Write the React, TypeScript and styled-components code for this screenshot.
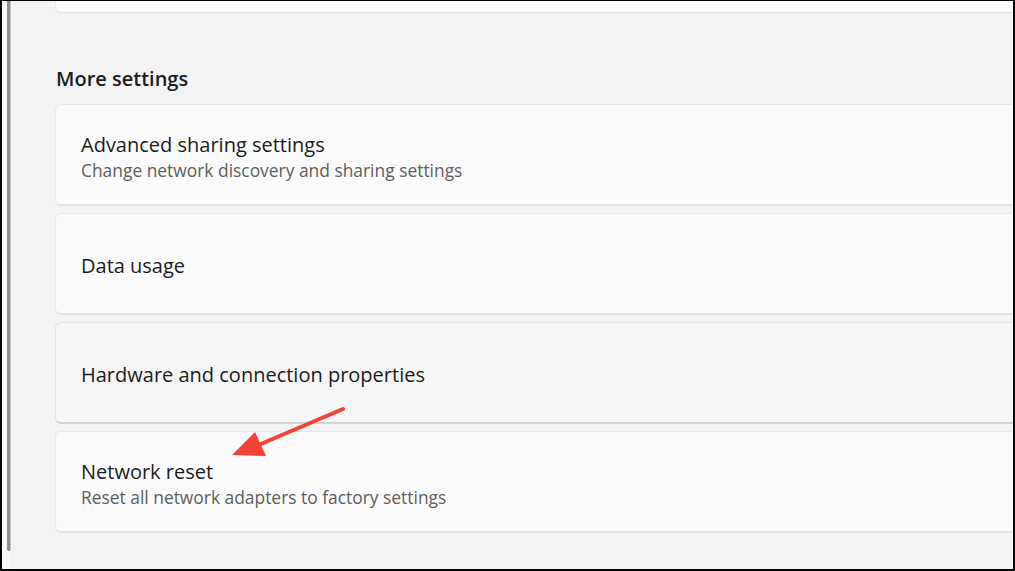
import React from "react";
import styled, { createGlobalStyle } from "styled-components";

const Global = createGlobalStyle`
  html, body { margin: 0; padding: 0; background: #000; }
  body { font-family: "Open Sans", "Noto Sans", sans-serif; }
  * { box-sizing: border-box; }
`;

const Frame = styled.div`
  position: relative;
  width: 1015px;
  height: 571px;
  border-left: 2px solid #000;
  border-top: 1px solid #000;
  border-right: 2px solid #000;
  border-bottom: 2px solid #000;
  display: flex;
  overflow: hidden;
  background: #f3f3f3;
`;

const Rail = styled.div`
  width: 8px;
  flex: none;
  background: #f9f9f9;
  padding-left: 5px;
`;

const ScrollThumb = styled.div`
  width: 3px;
  height: 550px;
  background: #8f8f8f;
  border-radius: 0 0 2px 2px;
  box-shadow: 1px 0 0 #c4c4c4;
`;

const Main = styled.main`
  flex: 1;
  min-width: 0;
  padding-left: 45px;
  display: flex;
  flex-direction: column;
  overflow: hidden;
`;

const ClippedCard = styled.div`
  height: 12px;
  margin-right: -12px;
  background: #fbfbfb;
  border: 1px solid #e6e6e6;
  border-top: none;
  border-bottom-color: #e2e2e2;
  border-radius: 0 0 6px 6px;
  flex: none;
`;

const Heading = styled.h2`
  margin: 52px 0 11px 1px;
  font-size: 20px;
  line-height: 28px;
  font-weight: 600;
  color: #1b1b1b;
`;

const List = styled.div`
  display: flex;
  flex-direction: column;
  gap: 7px;
  margin-right: -12px;
`;

const Card = styled.div<{ $hover?: boolean }>`
  height: 102px;
  display: flex;
  flex-direction: column;
  justify-content: center;
  padding: 4px 0 0 25px;
  background: ${(p) => (p.$hover ? "#f6f6f6" : "#fbfbfb")};
  border: 1px solid ${(p) => (p.$hover ? "#e3e3e3" : "#e8e8e8")};
  border-bottom: 2px solid ${(p) => (p.$hover ? "#d2d2d2" : "#e3e3e3")};
  border-radius: 6px;
`;

const Title = styled.div`
  font-size: 20px;
  line-height: 26px;
  color: #1b1b1b;
`;

const Subtitle = styled.div`
  font-size: 17.4px;
  line-height: 24px;
  color: #5e5e5e;
`;

const Arrow = styled.svg`
  position: absolute;
  left: 0;
  top: 0;
  pointer-events: none;
`;

const items: { title: string; sub?: string; hover?: boolean }[] = [
  { title: "Advanced sharing settings", sub: "Change network discovery and sharing settings" },
  { title: "Data usage" },
  { title: "Hardware and connection properties", hover: true },
  { title: "Network reset", sub: "Reset all network adapters to factory settings" },
];

export default function App() {
  return (
    <>
      <Global />
      <Frame>
        <Rail>
          <ScrollThumb />
        </Rail>
        <Main>
          <ClippedCard />
          <Heading>More settings</Heading>
          <List>
            {items.map((it) => (
              <Card key={it.title} $hover={it.hover}>
                <Title>{it.title}</Title>
                {it.sub && <Subtitle>{it.sub}</Subtitle>}
              </Card>
            ))}
          </List>
        </Main>
        <Arrow width="1015" height="571" viewBox="0 0 1015 571">
          <line x1="341" y1="408" x2="254" y2="445" stroke="#f44336" strokeWidth="4" strokeLinecap="round" />
          <polygon points="230,454 253,431 264,455" fill="#f44336" />
        </Arrow>
      </Frame>
    </>
  );
}
